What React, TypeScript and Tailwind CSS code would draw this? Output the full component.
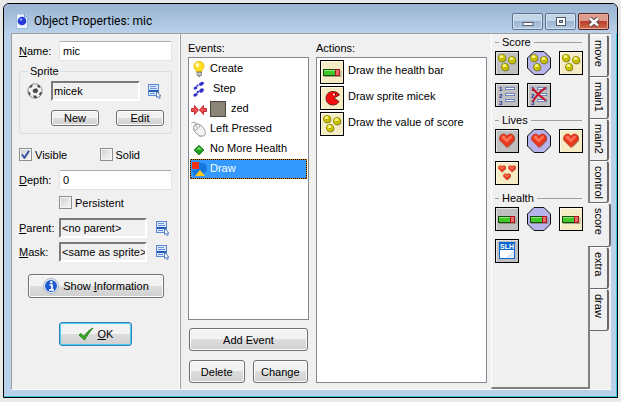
import { useState } from 'react';
import type { ReactNode } from 'react';

interface EventItem {
  id: string;
  label: string;
  icon: ReactNode;
  padded?: boolean;
  sprite?: boolean;
}

interface Tool {
  name: string;
  shape: 'gray' | 'octagon' | 'cream';
  icon: ReactNode;
}

const sunken =
  'h-5 min-w-0 border-2 border-t-[#7a7a7a] border-l-[#7a7a7a] border-r-white border-b-white bg-[#f0f0f0] pl-px text-left leading-4 whitespace-nowrap overflow-hidden';

const textBox =
  'h-5 w-full min-w-0 flex-1 rounded-xs border border-[#e2e3ea] border-t-[#abadb3] bg-white px-[3px] outline-none';

const pushButton =
  'flex items-center justify-center rounded-[3px] border border-[#707070] bg-linear-to-b from-[#f2f2f2] from-50% via-[#dddddd] via-50% to-[#cfcfcf] shadow-[inset_0_0_0_1px_#fcfcfc]';

const Ball = ({ cx, cy }: { cx: number; cy: number }) => (
  <g>
    <circle cx={cx + 0.6} cy={cy + 0.8} r="3.8" fill="#77773a" opacity="0.6" />
    <circle cx={cx} cy={cy} r="3.6" fill="#d8d000" stroke="#827d00" strokeWidth="0.8" />
    <circle cx={cx - 0.5} cy={cy - 1.2} r="1.7" fill="#f8f68a" />
    <path d={`M${cx - 1.5} ${cy + 0.8}h3`} stroke="#8c8600" strokeWidth="0.8" />
  </g>
);

const BallsIcon = () => (
  <>
    <Ball cx={7} cy={7} />
    <Ball cx={17} cy={9} />
    <Ball cx={10} cy={16} />
  </>
);

const HealthIcon = () => (
  <>
    <path d="M4 16.500h17v-6" fill="none" stroke="#77775f" opacity="0.6" />
    <rect x="3.5" y="9.5" width="16" height="6" fill="#40c828" stroke="#184c10" />
    <path d="M4 10.5h12" stroke="#8cec70" />
    <rect x="15.5" y="9.5" width="4" height="6" fill="#ee6a66" stroke="#a01818" />
  </>
);

const Heart = ({ x, y, size }: { x: number; y: number; size: number }) => (
  <svg x={x} y={y} width={size} height={size} viewBox="0 0 16 16">
    <path d="M9 15.5L16 8V4l-1.500-2z" fill="#6b4a40" opacity="0.5" />
    <path d="M8 14.500L1 7.500C-.5 4 2 1 4.500 1 6.300 1 7.500 2.200 8 3.500 8.500 2.200 9.700 1 11.500 1 14 1 16.500 4 15 7.500z" fill="#e8391c" stroke="#b72c14" strokeWidth="0.6" />
    <path d="M2.500 5C2.500 3 4 2 5.500 2.700L8 6l2.500-3c1.500-.5 2.500 0 2.500 1.500L8 9.500z" fill="#ff8064" opacity="0.8" />
  </svg>
);

const ListIcon = () => (
  <>
    <g fill="#0c2c98" fontFamily="Liberation Sans, sans-serif" fontWeight="bold" fontSize="6">
      <text x="4" y="8">1</text>
      <text x="4" y="15">2</text>
      <text x="4" y="22">3</text>
    </g>
    <g fill="#f4f7ff" stroke="#6c84b8">
      <rect x="10.5" y="4.5" width="9" height="2" />
      <rect x="10.5" y="10.5" width="9" height="2" />
      <rect x="10.5" y="16.5" width="9" height="2" />
    </g>
  </>
);

const ClearListIcon = () => (
  <>
    <ListIcon />
    <path d="M6 6c4 4 7 7 12 11M18 5C13 9 9 13 6 18" fill="none" stroke="#c8102a" strokeWidth="2" strokeLinecap="round" />
  </>
);

const PacmanIcon = () => (
  <>
    <path d="M13 5.500c3 0 5.500 1.500 6.500 3.500L14 12l5 3.500c-1.500 2.500-3.500 3.500-6 3.500-4.500 0-7-3-7-6.800 0-4 3-6.700 7-6.700z" fill="#f50d12" stroke="#5d2018" strokeWidth="0.900" />
    <circle cx="14" cy="8.500" r="1" fill="#fff" />
    <path d="M15.500 7.500v1.500" stroke="#300" />
  </>
);

const SlhIcon = () => (
  <>
    <rect x="4" y="3" width="16" height="17" fill="#0c68cf" />
    <rect x="5" y="11" width="14" height="8" fill="#fff" />
    <path d="M19 11v8h-9z" fill="#dcebfb" />
    <text x="12" y="10" textAnchor="middle" fill="#fff" fontFamily="Liberation Sans, sans-serif" fontWeight="bold" fontSize="7">SLH</text>
  </>
);

const Tile = ({ shape, children }: { shape: Tool['shape']; children: ReactNode }) => (
  <svg className="block size-6 shrink-0" viewBox="0 0 24 24">
    {shape === 'octagon' ? (
      <path d="M7 .5h10L23.500 7v10L17 23.500H7L.5 17V7z" fill="#b6b4ea" stroke="#111" />
    ) : (
      <>
        <rect width="24" height="24" fill="#000" />
        <rect x="1" y="1" width="22" height="22" fill={shape === 'gray' ? '#e3e3e3' : '#fffbe8'} />
        <rect x="2" y="2" width="21" height="21" fill={shape === 'gray' ? '#bfbfbf' : '#f5ebc5'} />
      </>
    )}
    {children}
  </svg>
);

const BulbIcon = () => (
  <svg className="size-4" viewBox="0 0 16 16">
    <path d="M8 .5c-3 0-5 2-5 4.700C3 8 5.500 9 5.500 11h5c0-2 2.500-3 2.500-5.800C13 2.500 11 .5 8 .5z" fill="#ffdf20" stroke="#e6ae10" strokeWidth="0.800" />
    <ellipse cx="6.500" cy="4" rx="1.800" ry="2.200" fill="#fffbc0" />
    <path d="M6 11h4.500v3L9 15.500H7.500L6 14z" fill="#a8a8a0" stroke="#66665c" strokeWidth="0.700" />
    <path d="M6 12.700h4.500" stroke="#eee" strokeWidth="0.800" />
  </svg>
);

const StepsIcon = () => (
  <svg className="size-4" viewBox="0 0 16 16" fill="#3434c8">
    <ellipse cx="10.500" cy="2.800" rx="2.600" ry="1.800" transform="rotate(-30 10.500 2.800)" />
    <circle cx="6.500" cy="4.500" r="1.100" />
    <ellipse cx="4.500" cy="7" rx="2" ry="1.500" transform="rotate(-30 4.500 7)" />
    <ellipse cx="10.500" cy="9.500" rx="2.600" ry="1.900" transform="rotate(-30 10.500 9.500)" />
    <circle cx="6.800" cy="11" r="1.200" />
    <ellipse cx="4.500" cy="13.800" rx="2.200" ry="1.600" transform="rotate(-30 4.500 13.800)" />
  </svg>
);

const CollisionIcon = () => (
  <svg className="size-4" viewBox="0 0 16 16">
    <path d="M.5 7.500h3V4.500l4 4.500-4 4.500v-3h-3zM15.500 7.500h-3V4.500l-4 4.500 4 4.500v-3h3z" fill="#f05050" stroke="#c01c24" strokeWidth="0.900" />
  </svg>
);

const MouseIcon = () => (
  <svg className="size-4" viewBox="0 0 16 16">
    <path d="M6 4C5 1 2 .5.500 2.500" fill="none" stroke="#888" />
    <path d="M3 5c2-3 6-2.500 9 1.500 3 4 3.500 6.500 1 8s-5.500.5-8-2.500C2.500 9 1.800 7 3 5z" fill="#f4f4f4" stroke="#8a8a8a" strokeWidth="0.900" />
    <path d="M3 9c3 0 5-1.500 6-5M4 3.500l2.500 3.500" fill="none" stroke="#999" strokeWidth="0.800" />
    <path d="M7 14.500c2.500 1.500 6 1 7.500-2.500" fill="none" stroke="#bbb" />
  </svg>
);

const DiamondIcon = () => (
  <svg className="size-4" viewBox="0 0 16 16">
    <path d="M8 4.500l4.800 4.500L8 13.800 3.200 9z" fill="#22a022" stroke="#0b5f0b" />
    <path d="M8 5.700l3 3H5z" fill="#66dc5c" />
  </svg>
);

const DrawIcon = () => (
  <svg className="size-4" viewBox="0 0 16 16">
    <circle cx="10.500" cy="7" r="5.500" fill="#1578e0" />
    <path d="M1 9h6l-1 6H3z" fill="#1578e0" />
    <rect x="1" y="1" width="7" height="7" fill="#f03218" />
    <path d="M9 9l5 6H4z" fill="#ffc921" />
  </svg>
);

const FootballIcon = () => (
  <svg className="size-4 shrink-0" viewBox="0 0 16 16">
    <circle cx="8" cy="8" r="7.200" fill="#f2f2f2" stroke="#909090" />
    <path d="M6.500 6l3-.8 1.800 2-1.300 2.800H7L5.500 8zM3 2.800L6 1.500 5 4 2.500 5.500zM11 1.600l2.500 2-1 1.400-2.500-1.500zM1 8.500l2 .8.800 3L2 12zM13 9l2 0-1.200 3.300-2-.3zM6 12.500l3 0 1.500 2-3 .9z" fill="#4c4c4c" />
  </svg>
);

const MenuIcon = () => (
  <svg className="h-4 w-3.5" viewBox="0 0 14 16">
    <rect x=".5" y="1.500" width="10" height="11" fill="#dce8fb" stroke="#5a88d0" />
    <path d="M2 3.500h6M2 5.500h7M2 10.500h5" stroke="#6a92d8" />
    <path d="M1 8h9" stroke="#2458b8" strokeWidth="2" />
    <path d="M8.500 8.500v6l1.400-1.200 1.100 2.200 1.300-.7-1-2h1.700z" fill="#fff" stroke="#3867b8" strokeWidth="0.800" />
  </svg>
);

const events: EventItem[] = [
  { id: 'create', label: 'Create', icon: <BulbIcon /> },
  { id: 'step', label: 'Step', icon: <StepsIcon />, padded: true },
  { id: 'zed', label: 'zed', icon: <CollisionIcon />, sprite: true },
  { id: 'left', label: 'Left Pressed', icon: <MouseIcon /> },
  { id: 'health', label: 'No More Health', icon: <DiamondIcon /> },
  { id: 'draw', label: 'Draw', icon: <DrawIcon /> },
];

const actions = [
  { label: 'Draw the health bar', icon: <HealthIcon /> },
  { label: 'Draw sprite micek', icon: <PacmanIcon /> },
  { label: 'Draw the value of score', icon: <BallsIcon /> },
];

const bigHeart = <Heart x={4} y={4} size={16} />;

const toolGroups: { title: string; tools: Tool[] }[] = [
  {
    title: 'Score',
    tools: [
      { name: 'Set Score', shape: 'gray', icon: <BallsIcon /> },
      { name: 'Test Score', shape: 'octagon', icon: <BallsIcon /> },
      { name: 'Draw Score', shape: 'cream', icon: <BallsIcon /> },
      { name: 'Show Highscore', shape: 'gray', icon: <ListIcon /> },
      { name: 'Clear Highscore', shape: 'gray', icon: <ClearListIcon /> },
    ],
  },
  {
    title: 'Lives',
    tools: [
      { name: 'Set Lives', shape: 'gray', icon: bigHeart },
      { name: 'Test Lives', shape: 'octagon', icon: bigHeart },
      { name: 'Draw Lives', shape: 'cream', icon: bigHeart },
      {
        name: 'Draw Life Images',
        shape: 'cream',
        icon: (
          <>
            <Heart x={3} y={4} size={8} />
            <Heart x={13} y={4} size={8} />
            <Heart x={8} y={12} size={8} />
          </>
        ),
      },
    ],
  },
  {
    title: 'Health',
    tools: [
      { name: 'Set Health', shape: 'gray', icon: <HealthIcon /> },
      { name: 'Test Health', shape: 'octagon', icon: <HealthIcon /> },
      { name: 'Draw Health', shape: 'cream', icon: <HealthIcon /> },
      { name: 'Score Caption', shape: 'gray', icon: <SlhIcon /> },
    ],
  },
];

const tabs = ['move', 'main1', 'main2', 'control', 'score', 'extra', 'draw'];

const CheckBox = ({ label, checked, onChange }: { label: string; checked: boolean; onChange: (v: boolean) => void }) => (
  <label className="flex h-[13px] items-center gap-[3px]">
    <span className="grid size-[13px] place-items-center">
      <input
        type="checkbox"
        checked={checked}
        onChange={(e) => onChange(e.target.checked)}
        className="col-start-1 row-start-1 size-[13px] appearance-none border border-[#8e8f8f] bg-linear-to-br from-[#cdd0d4] to-[#f8f8f8] shadow-[inset_0_0_0_1px_#f4f4f4]"
      />
      {checked && (
        <svg className="pointer-events-none col-start-1 row-start-1 size-[9px]" viewBox="0 0 9 9">
          <path d="M1 4.500l2.500 3.300L8 .8" fill="none" stroke="#3c53a4" strokeWidth="2" />
        </svg>
      )}
    </span>
    {label}
  </label>
);

const TitleBar = () => (
  <header className="flex h-[29px] items-start justify-between bg-linear-to-b from-[#98b4d2] to-[#b9d0e9] pr-2 pl-3">
    <div className="flex h-full items-center gap-1.5 pt-1">
      <svg className="h-4 w-3" viewBox="0 0 12 16">
        <path d="M.5 1h8l3 3v11.500H.5z" fill="#eaf3ff" stroke="#9ab8e4" />
        <path d="M8.500 1v3h3" fill="#bcd4f6" stroke="#78a0d8" />
        <circle cx="6" cy="8" r="4.300" fill="#2438d8" />
        <circle cx="5" cy="6.500" r="1.500" fill="#7c90ff" />
      </svg>
      <h1 className="font-[Roboto,sans-serif] text-[12px] text-black">Object Properties: mic</h1>
    </div>
    <div className="flex gap-0.5 pt-[9px]">
      <button type="button" aria-label="Minimize" className="flex h-[17px] w-[31px] items-center justify-center rounded-xs border border-[#5d7390] bg-linear-to-b from-[#c3d5e9] from-50% via-[#9db6d1] via-50% to-[#b3cae2] shadow-[inset_0_0_0_1px_#d3e1ef]">
        <svg className="h-3 w-3" viewBox="0 0 12 12"><rect x="1" y="6.500" width="10" height="3" fill="#fff" stroke="#525a66" /></svg>
      </button>
      <button type="button" aria-label="Maximize" className="flex h-[17px] w-[31px] items-center justify-center rounded-xs border border-[#5d7390] bg-linear-to-b from-[#c3d5e9] from-50% via-[#9db6d1] via-50% to-[#b3cae2] shadow-[inset_0_0_0_1px_#d3e1ef]">
        <svg className="h-3 w-3" viewBox="0 0 12 12">
          <rect x="1.500" y="1.500" width="9" height="8" fill="#fff" stroke="#525a66" />
          <rect x="4.500" y="4.500" width="3" height="2" fill="#9db6d1" stroke="#525a66" />
        </svg>
      </button>
      <button type="button" aria-label="Close" className="flex h-[17px] w-[31px] items-center justify-center rounded-xs border border-[#5a2320] bg-linear-to-b from-[#dd9b8e] from-50% via-[#bb3f2b] via-50% to-[#cf6a4f] shadow-[inset_0_0_0_1px_#e5aba0]">
        <svg className="h-3 w-3" viewBox="0 0 12 12">
          <path d="M2 2.500l8 7M10 2.500l-8 7" stroke="#5b4448" strokeWidth="4.500" />
          <path d="M2 2.500l8 7M10 2.500l-8 7" stroke="#fff" strokeWidth="2.500" />
        </svg>
      </button>
    </div>
  </header>
);

const PropertiesPanel = () => {
  const [name, setName] = useState('mic');
  const [depth, setDepth] = useState('0');
  const [visible, setVisible] = useState(true);
  const [solid, setSolid] = useState(false);
  const [persistent, setPersistent] = useState(false);

  return (
    <section className="flex w-[169px] shrink-0 flex-col border-r border-r-[#a0a0a0] pt-[7px] pr-2 pl-[7px] shadow-[inset_-1px_0_0_#fff]">
      <div className="flex items-center">
        <label htmlFor="name" className="w-10 shrink-0"><u>N</u>ame:</label>
        <input id="name" value={name} onChange={(e) => setName(e.target.value)} className={textBox} />
      </div>

      <fieldset className="mt-0.5 min-w-0 rounded-[3px] border border-[#d5dfe5] px-[7px] pb-[7px]">
        <legend className="ml-px px-0.5 leading-4">Sprite</legend>
        <div className="flex items-center gap-2 pt-0.5 pr-0.5">
          <FootballIcon />
          <output className={`${sunken} flex-1`}>micek</output>
          <button type="button" aria-label="Select sprite"><MenuIcon /></button>
        </div>
        <div className="mt-[9px] flex justify-between pl-6">
          <button type="button" className={`${pushButton} h-4 w-12`}>New</button>
          <button type="button" className={`${pushButton} h-4 w-12`}>Edit</button>
        </div>
      </fieldset>

      <div className="mt-3.5 grid grid-cols-2 gap-2">
        <CheckBox label="Visible" checked={visible} onChange={setVisible} />
        <CheckBox label="Solid" checked={solid} onChange={setSolid} />
      </div>

      <div className="mt-[9px] flex items-center">
        <label htmlFor="depth" className="w-10 shrink-0"><u>D</u>epth:</label>
        <input id="depth" value={depth} onChange={(e) => setDepth(e.target.value)} className={textBox} />
      </div>
      <div className="mt-1.5 pl-10">
        <CheckBox label="Persistent" checked={persistent} onChange={setPersistent} />
      </div>

      <div className="mt-[9px] flex items-center pr-0.5">
        <span className="w-10 shrink-0"><u>P</u>arent:</span>
        <output className={`${sunken} w-[88px]`}>&lt;no parent&gt;</output>
        <button type="button" aria-label="Select parent" className="ml-auto"><MenuIcon /></button>
      </div>
      <div className="mt-1 flex items-center pr-0.5">
        <span className="w-10 shrink-0"><u>M</u>ask:</span>
        <output className={`${sunken} w-[88px]`}>&lt;same as sprite&gt;</output>
        <button type="button" aria-label="Select mask" className="ml-auto"><MenuIcon /></button>
      </div>

      <button type="button" className={`${pushButton} mt-3 mr-2 ml-[9px] h-6 gap-1`}>
        <svg className="size-4" viewBox="0 0 16 16">
          <circle cx="8" cy="8" r="7.500" fill="#e8eef8" stroke="#9aa4b8" strokeWidth="0.800" />
          <circle cx="8" cy="8" r="6" fill="#1e5ad0" />
          <path d="M6.500 7H9v4.500M6 11.800h5" fill="none" stroke="#fff" strokeWidth="1.700" />
          <circle cx="8.300" cy="4.300" r="1.200" fill="#fff" />
        </svg>
        <span>Show <u>I</u>nformation</span>
      </button>
      <button type="button" className="mt-6 flex h-6 w-[73px] items-center justify-center gap-1 self-center rounded-[3px] border border-[#3c7fb1] bg-linear-to-b from-[#f2f2f2] from-50% via-[#dddddd] via-50% to-[#cfcfcf] shadow-[inset_0_0_0_1px_#48cdf0]">
        <svg className="size-4" viewBox="0 0 16 16">
          <path d="M1 9l2-1.500 3 3C8 7 11 4 15 2 12 5.500 9 9.500 6.500 14z" fill="#3cb020" stroke="#1d7a12" strokeWidth="0.900" />
        </svg>
        <span><u>O</u>K</span>
      </button>
    </section>
  );
};

const EventsPanel = () => {
  const [selected, setSelected] = useState('draw');

  return (
    <section className="flex w-[135px] shrink-0 flex-col px-[7px] pt-1.5 pb-1.5">
      <h2 className="leading-4">Events:</h2>
      <ul className="mt-px flex-1 border border-[#828790] bg-white p-px">
        {events.map((ev) => (
          <li key={ev.id} className={selected === ev.id ? 'bg-black' : ''}>
            <button
              type="button"
              onClick={() => setSelected(ev.id)}
              className={`flex h-5 w-full items-center gap-[3px] border border-dotted bg-clip-padding text-left ${
                selected === ev.id ? 'border-[#e07a00] bg-[#3399ff] text-white' : 'border-transparent'
              }`}
            >
              {ev.icon}
              {ev.sprite && <span className="mr-0.5 size-4 border border-[#4a463c] bg-[#8b8578]" />}
              <span className={ev.padded ? 'pb-0.5 pl-[3px]' : 'pb-0.5'}>{ev.label}</span>
            </button>
          </li>
        ))}
      </ul>
      <button type="button" className={`${pushButton} mx-px mt-2 h-[23px]`}>Add Event</button>
      <div className="mx-px mt-[9px] grid grid-cols-2 gap-2">
        <button type="button" className={`${pushButton} h-[23px]`}>Delete</button>
        <button type="button" className={`${pushButton} h-[23px]`}>Change</button>
      </div>
    </section>
  );
};

const ActionsPanel = () => (
  <section className="flex min-w-0 flex-1 flex-col pt-1.5 pr-1 pb-1.5">
    <h2 className="leading-4">Actions:</h2>
    <ul className="mt-px flex flex-1 flex-col gap-0.5 border border-[#828790] bg-white px-[3px] py-0.5">
      {actions.map((action) => (
        <li key={action.label} className="flex items-center gap-1 whitespace-nowrap">
          <Tile shape="cream">{action.icon}</Tile>
          <span className="pb-1">{action.label}</span>
        </li>
      ))}
    </ul>
  </section>
);

const Toolbox = () => {
  const [tab, setTab] = useState('score');

  return (
    <aside className="flex w-[120px] shrink-0">
      <div className="flex w-[99px] flex-col border-r-2 border-b-2 border-l border-r-[#808080] border-b-[#808080] border-l-white pt-px pl-[3px]">
        {toolGroups.map((group) => (
          <section key={group.title} className="pb-1.5">
            <h3 className="flex h-4 items-center gap-[3px] pr-1.5 pb-0.5">
              <span className="h-px w-1 bg-[#a0a0a0]" />
              {group.title}
              <span className="h-px flex-1 bg-[#a0a0a0]" />
            </h3>
            <div className="grid grid-cols-3 gap-2 pr-[5px]">
              {group.tools.map((tool) => (
                <button key={tool.name} type="button" aria-label={tool.name} className="size-6">
                  <Tile shape={tool.shape}>{tool.icon}</Tile>
                </button>
              ))}
            </div>
          </section>
        ))}
      </div>
      <div role="tablist" aria-orientation="vertical" className="flex flex-1 flex-col items-start pt-px">
        {tabs.map((name) => (
          <button
            key={name}
            type="button"
            role="tab"
            aria-selected={tab === name}
            onClick={() => setTab(name)}
            className={`flex items-center rounded-r-[3px] border-t border-r-2 border-b border-t-white border-r-[#696969] border-b-[#696969] pt-1 [writing-mode:vertical-rl] ${
              tab === name ? '-ml-0.5 h-11 w-[23px] bg-[#f0f0f0]' : 'h-[42px] w-[19px]'
            }`}
          >
            {name}
          </button>
        ))}
      </div>
    </aside>
  );
};

const App = () => (
  <div className="flex min-h-screen flex-col bg-[#e9e9e9] p-[3px] pb-1 font-['Liberation_Sans',Arial,sans-serif] text-[11px] leading-[14px] text-black">
    <main className="flex flex-1 flex-col overflow-hidden rounded-t-md border border-black bg-[#b9d1ea] shadow-[inset_-1px_-1px_0_#35c8dc]">
      <TitleBar />
      <div className="mr-1.5 mb-[7px] ml-[7px] flex flex-1 border-t border-b border-l border-t-[#a0a0a0] border-b-white border-l-[#a0a0a0] bg-[#f0f0f0]">
        <PropertiesPanel />
        <EventsPanel />
        <ActionsPanel />
        <Toolbox />
      </div>
    </main>
  </div>
);

export default App;
